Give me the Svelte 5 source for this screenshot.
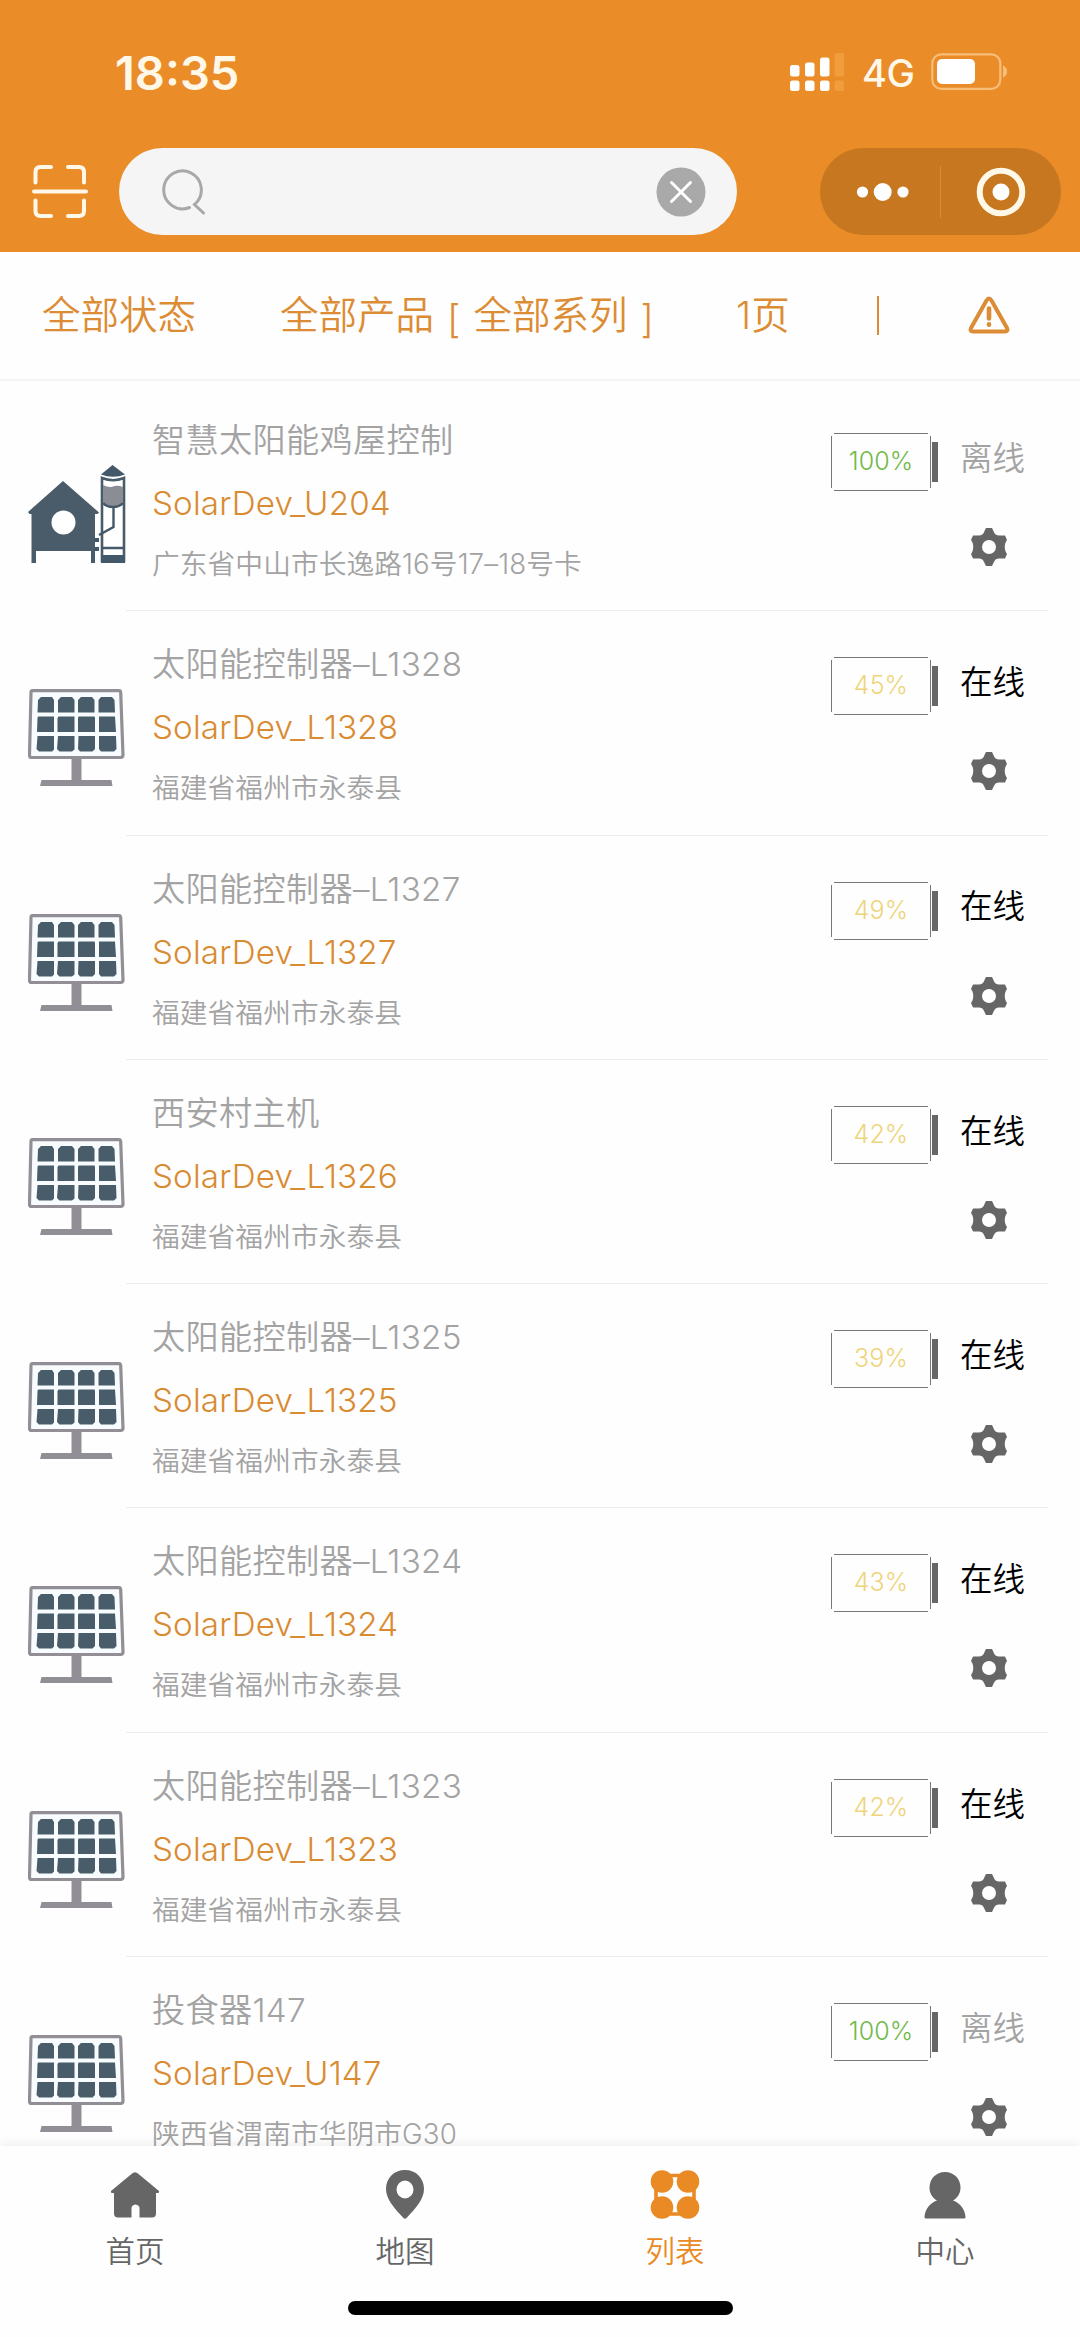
<script>
  const devices = [
    { name: '智慧太阳能鸡屋控制', code: 'SolarDev_U204', address: '广东省中山市长逸路16号17–18号卡', battery: 100, online: false, icon: 'coop' },
    { name: '太阳能控制器–L1328', code: 'SolarDev_L1328', address: '福建省福州市永泰县', battery: 45, online: true, icon: 'panel' },
    { name: '太阳能控制器–L1327', code: 'SolarDev_L1327', address: '福建省福州市永泰县', battery: 49, online: true, icon: 'panel' },
    { name: '西安村主机', code: 'SolarDev_L1326', address: '福建省福州市永泰县', battery: 42, online: true, icon: 'panel' },
    { name: '太阳能控制器–L1325', code: 'SolarDev_L1325', address: '福建省福州市永泰县', battery: 39, online: true, icon: 'panel' },
    { name: '太阳能控制器–L1324', code: 'SolarDev_L1324', address: '福建省福州市永泰县', battery: 43, online: true, icon: 'panel' },
    { name: '太阳能控制器–L1323', code: 'SolarDev_L1323', address: '福建省福州市永泰县', battery: 42, online: true, icon: 'panel' },
    { name: '投食器147', code: 'SolarDev_U147', address: '陕西省渭南市华阴市G30', battery: 100, online: false, icon: 'panel' },
  ];

  const tabs = [
    { id: 'home', label: '首页' },
    { id: 'map', label: '地图' },
    { id: 'list', label: '列表' },
    { id: 'me', label: '中心' },
  ];

  let active = $state('list');
  let keyword = $state('');
</script>

<div class="page">
  <header>
    <div class="status-bar">
      <span class="time">18:35</span>
      <svg width="55" height="38" viewBox="0 0 55 38" fill="#fff">
        <rect x="0" y="12" width="9.5" height="11.5" rx="2.5" />
        <rect x="15" y="9.5" width="9.5" height="14" rx="2.5" />
        <rect x="30" y="4.5" width="9.5" height="19" rx="2.5" />
        <rect x="0" y="27.5" width="9.5" height="10.5" rx="2.5" />
        <rect x="15" y="27.5" width="9.5" height="10.5" rx="2.5" />
        <rect x="30" y="27.5" width="9.5" height="10.5" rx="2.5" />
        <g fill="#f19d3c">
          <rect x="44.5" y="0" width="9.5" height="23.5" rx="2" />
          <rect x="44.5" y="27.5" width="9.5" height="10.5" rx="2" />
        </g>
      </svg>
      <span class="network">4G</span>
      <svg width="77" height="38" viewBox="0 0 77 38">
        <rect x="1.3" y="1.3" width="68" height="34.5" rx="9" fill="none" stroke="#f8bd78" stroke-width="2.2" />
        <rect x="6" y="6" width="38" height="25" rx="5" fill="#fff" />
        <path d="M72 12.5q4 1.5 4 6t-4 6z" fill="#f8bd78" />
      </svg>
    </div>

    <div class="search-bar">
      <svg width="56" height="54" viewBox="0 0 56 54" fill="none" stroke="#fff8e8" stroke-width="4" stroke-linecap="round" stroke-linejoin="round">
        <path d="M3.5 17.5V7q0-5 5-5H19M36 2h11q5 0 5 5v10.5M52 35.5V46q0 5-5 5H36M19 51H8.5q-5 0-5-5V35.5M2 26.5h52" />
      </svg>
      <label class="search">
        <svg width="46" height="46" viewBox="0 0 46 46" fill="none" stroke="#a8a8a8" stroke-width="3" stroke-linecap="round">
          <path d="M29.5 38.5A18.8 19 0 1 1 34.5 35.5L43.5 44" />
        </svg>
        <input type="text" aria-label="搜索" bind:value={keyword} />
        <svg width="50" height="50" viewBox="0 0 50 50">
          <circle cx="25" cy="25" r="24.5" fill="#a9a9a9" />
          <path d="M15.5 15.5l19 19M34.5 15.5l-19 19" stroke="#fff" stroke-width="3" stroke-linecap="round" />
        </svg>
      </label>
      <div class="capsule">
        <svg width="52" height="20" viewBox="0 0 52 20" fill="#fff">
          <circle cx="5.5" cy="10" r="5.6" />
          <circle cx="25.7" cy="10" r="9" />
          <circle cx="46" cy="10" r="5.6" />
        </svg>
        <span class="capsule-line"></span>
        <svg width="50" height="50" viewBox="0 0 50 50">
          <circle cx="25" cy="25" r="21.3" fill="none" stroke="#fff8e8" stroke-width="6" />
          <circle cx="25" cy="25" r="8.5" fill="#fff" />
        </svg>
      </div>
    </div>
  </header>

  <div class="filters">
    <span class="state">全部状态</span>
    <span class="product"><span>全部产品</span><span class="bracket">[</span><span>全部系列</span><span class="bracket">]</span></span>
    <span class="count">1页</span>
    <span class="bar"></span>
    <svg width="42" height="38" viewBox="0 0 42 38" fill="none" stroke="#dc8c34" stroke-linecap="round" stroke-linejoin="round">
      <path d="M18.5 4.5Q21 .5 23.5 4.5L39 32Q40.5 35.5 37 35.5H5Q1.5 35.5 3 32Z" stroke-width="4" />
      <path d="M21 12.5v10M21 28.3v.4" stroke-width="4.6" />
    </svg>
  </div>

  <main>
    {#each devices as device}
      <article class="device">
        {#if device.icon === 'coop'}
          <svg class="thumb" width="98" height="98" viewBox="0 0 98 98">
            <path d="M35 16L71 47.5l-1.500 1.500H67v49h-4V86H8v12H3.500V49H1.500L0 47Z" fill="#4a5b69" />
            <circle cx="35.500" cy="57.500" r="12" fill="#fff" />
            <path d="M84.500 0L97 9.500Q85 14 73 9.500Z" fill="#435869" />
            <path d="M74 13q11 4.500 22 0v83H74Z" fill="#fff" stroke="#4a5b69" stroke-width="2.600" />
            <path d="M75 20q6 3 10 1.500t10 .5v15q-4 5-10 5t-10-5Z" fill="#8b8d94" />
            <path d="M75 38q3.500 4 10 4t10-4M85.500 42v20L71 70M74 83h22" fill="none" stroke="#435869" stroke-width="2.400" />
            <path d="M73 90h24v8H73zM66 73h5v4h-5zM66 82h5v4h-5z" fill="#435869" />
          </svg>
        {:else}
          <svg class="thumb" width="98" height="98" viewBox="0 0 98 98">
            <path d="M43.5 68h10v23h30l1 6H12l1.5-6h30z" fill="#918f95" />
            <path d="M4.5 1.7H91q1.5 0 1.7 2L95 66q0 2.5-2.5 2.5h-89q-2 0-2-2.5L3 3.5q0-1.8 1.5-1.8Z" fill="#f8fcff" stroke="#918f95" stroke-width="3.2" />
            <g fill="#485c69">
              <path d="M13 8h11l2 3v12.5H9.5L10 11zM33 8h11l2.5 3v12.5H30V11zM53 8h11l2.5 3v12.5H50V11zM73 8h11l2.5 3 .5 12.5H70.5V11z" />
              <path d="M10 27.5h16V43H9l.5-14zM30.5 27.5h16V43h-17V29zM50.5 27.5h16l.5 1.5v14H50V29zM71 27.5h16L88 43H71z" />
              <path d="M9.5 47H26v13.5l-2 2H11L8.5 60zM30 47h16.5v13.5l-2.5 2H31.5L29 60zM50.5 47H67v13l-2.500 2.500H52L50 60zM71 47h17l.5 13-2.500 2.500H73L71 60z" />
            </g>
          </svg>
        {/if}
        <div class="body">
          <div class="info">
            <div class="name">{device.name}</div>
            <div class="code">{device.code}</div>
            <div class="address">{device.address}</div>
          </div>
          <div class="side">
            <div class="battery" class:full={device.battery === 100}>
              <span class="cell">
                <i class="edge horizontal"></i>
                <i class="edge vertical"></i>
                {device.battery}%
              </span>
              <span class="cap"></span>
            </div>
            <span class="status" class:online={device.online}>{device.online ? '在线' : '离线'}</span>
            <svg class="gear" width="36" height="38" viewBox="0 0 36 38">
              <path fill="#666" fill-rule="evenodd" d="M15 0h6c2 3 2 7.500 7 7.500h6l2 4.500c-3 4-3 10 0 14l-2 4.500h-6c-5 0-5 4.500-7 7.500h-6c-2-3-2-7.500-7-7.500H2L0 26c3-4 3-10 0-14l2-4.500h6c5 0 5-4.500 7-7.500ZM18 12a7 7 0 1 0 0 14 7 7 0 1 0 0-14Z" />
            </svg>
          </div>
        </div>
      </article>
    {/each}
  </main>

  <nav>
    <div class="tabs">
      {#each tabs as tab}
        <button type="button" class:active={active === tab.id} onclick={() => active = tab.id}>
          <svg width="50" height="50" viewBox="0 0 50 50" fill="currentColor">
            {#if tab.id === 'home'}
              <path d="M21.5 4Q25 .5 28.5 4L49 21q.5 2-1 2H46v20.5q0 4-4 4H29.5V38q0-3-4-3.5-4 .5-4 3.5v9.5H8q-4 0-4-4V23H2q-1.5 0-1-2Z" />
            {:else if tab.id === 'map'}
              <path fill-rule="evenodd" d="M25 0C14 0 6 8 6 19c0 10 8 19 17.5 29q1.5 1.5 3 0C36 38 44 29 44 19 44 8 36 0 25 0ZM25 10.5a8.5 9 0 1 1 0 18 8.5 9 0 1 1 0-18Z" />
            {:else if tab.id === 'list'}
              <rect x="6" y="5.5" width="38" height="38.5" rx="4" fill="none" stroke="currentColor" stroke-width="3.6" />
              <circle cx="12" cy="11.5" r="11.3" />
              <circle cx="38" cy="11.5" r="11.3" />
              <circle cx="12" cy="37.5" r="11.3" />
              <circle cx="38" cy="37.5" r="11.3" />
            {:else}
              <path d="M25 2C16 2 9.5 9 9.5 17.5c0 6 3 10.500 7.500 13C10 33 5 39 4.500 47q0 1.500 1.500 1.500h38q1.500 0 1.500-1.500C45 39 40 33 33 30.500c4.500-2.500 7.500-7 7.500-13C40.500 9 34 2 25 2Z" />
            {/if}
          </svg>
          <span>{tab.label}</span>
        </button>
      {/each}
    </div>
    <div class="home-indicator"></div>
  </nav>
</div>

<style>
  :global(body) {
    margin: 0;
    background: #fefefe;
  }

  .page {
    display: flex;
    flex-direction: column;
    width: 1080px;
    height: 2337px;
    overflow: hidden;
    background: #fefefe;
    font-family: Inter, "Noto Sans CJK SC", sans-serif;
    font-weight: 350;
  }

  svg {
    display: block;
    flex: none;
  }

  header {
    flex: none;
    height: 252px;
    background: #ea8c28;
  }

  .status-bar {
    display: flex;
    align-items: center;
    height: 148px;
    box-sizing: border-box;
    padding: 0 72px 4px 115px;
    color: #fff;
  }

  .time {
    flex: 1;
    font-size: 47px;
    font-weight: 600;
    color: #fff8e8;
  }

  .network {
    width: 51px;
    margin: 2px 18px 0 17px;
    font-size: 38px;
    font-weight: 500;
    letter-spacing: -0.5px;
    color: #fff8e8;
  }

  .search-bar {
    display: flex;
    align-items: center;
    height: 87px;
    padding: 0 19px 0 32px;
  }

  .search {
    display: flex;
    align-items: center;
    width: 618px;
    height: 87px;
    box-sizing: border-box;
    margin: 0 83px 0 31px;
    padding: 0 31px 0 41px;
    border-radius: 44px;
    background: #f5f5f6;
  }

  .search input {
    flex: 1;
    min-width: 0;
    padding: 0 16px;
    border: none;
    outline: none;
    background: none;
    font: inherit;
    font-size: 34px;
  }

  .capsule {
    display: flex;
    align-items: center;
    width: 241px;
    height: 87px;
    box-sizing: border-box;
    padding-left: 37px;
    border-radius: 44px;
    background: #c7771f;
  }

  .capsule-line {
    width: 1px;
    height: 52px;
    margin: 0 35px 0 31px;
    background: #dd8a31;
  }

  .filters {
    display: flex;
    flex: none;
    align-items: center;
    height: 129px;
    box-sizing: border-box;
    padding: 0 0 1px 42px;
    border-bottom: 2px solid #f4f4f4;
    font-size: 38.5px;
    line-height: 56px;
    color: #dc8c34;
  }

  .state {
    width: 238px;
  }

  .product {
    display: flex;
    gap: 13px;
    width: 456px;
    padding-top: 4px;
  }

  .bracket {
    padding-top: 4px;
  }

  .count {
    width: 141px;
  }

  .bar {
    width: 2px;
    height: 39px;
    margin-right: 89px;
    background: #dc8c34;
  }

  main {
    flex: 1;
    min-height: 0;
    padding-top: 6px;
    overflow: hidden;
  }

  .device {
    display: flex;
    height: 224.3px;
    padding: 0 32px 0 28px;
  }

  .thumb {
    margin-top: 78px;
  }

  .body {
    display: flex;
    flex: 1;
    box-sizing: border-box;
    padding-left: 26px;
    border-bottom: 1px solid #ededed;
  }

  .info {
    flex: 1;
    padding-top: 22px;
    white-space: nowrap;
    color: #a3a3a3;
  }

  .name {
    font-size: 33.2px;
    line-height: 62px;
    letter-spacing: 0.3px;
  }

  .code {
    font-size: 33.2px;
    line-height: 64px;
    letter-spacing: 0.15px;
    color: #d98b32;
  }

  .address {
    font-size: 27.7px;
    line-height: 58px;
    letter-spacing: 0.1px;
  }

  .side {
    display: grid;
    grid-template-columns: 129px 88px;
    grid-template-rows: 58px 38px;
    align-content: start;
    row-gap: 37px;
    padding-top: 46px;
  }

  .battery {
    display: flex;
    align-items: center;
    gap: 1px;
    font-size: 25px;
    color: #eed47a;
  }

  .battery.full {
    color: #72b94a;
  }

  .cell {
    position: relative;
    display: flex;
    align-items: center;
    justify-content: center;
    width: 100px;
    height: 58px;
    box-sizing: border-box;
    padding-bottom: 2px;
    letter-spacing: 0.1px;
  }

  .edge {
    position: absolute;
  }

  /* the outline stays open at the four corners */
  .horizontal {
    inset: 0 3px;
    border: solid #777;
    border-width: 1px 0;
  }

  .vertical {
    inset: 3px 0;
    border: solid #777;
    border-width: 0 1px;
  }

  .cap {
    width: 6px;
    height: 40px;
    background: #666;
  }

  .status {
    align-self: center;
    padding-bottom: 6px;
    font-size: 32.5px;
    line-height: 1;
    color: #a3a3a3;
  }

  .status.online {
    color: #000;
  }

  .gear {
    grid-column: 2;
    margin-left: 11px;
  }

  nav {
    flex: none;
    height: 191px;
    background: #fefefe;
    box-shadow: 0 -2px 10px rgba(0, 0, 0, 0.07);
    z-index: 1;
  }

  .tabs {
    display: grid;
    grid-template-columns: repeat(4, 1fr);
    height: 155px;
  }

  button {
    display: flex;
    flex-direction: column;
    align-items: center;
    gap: 11px;
    padding: 24px 0 0;
    border: none;
    background: none;
    font: inherit;
    font-size: 29.5px;
    line-height: 40px;
    color: #666;
  }

  button.active {
    color: #e98a25;
  }

  .home-indicator {
    width: 385px;
    height: 14px;
    margin: 0 auto;
    border-radius: 7px;
    background: #000;
  }
</style>
